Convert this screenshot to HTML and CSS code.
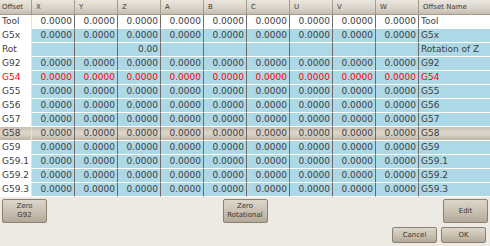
FILE: index.html
```html
<!DOCTYPE html>
<html lang="en">
<head>
  <meta charset="UTF-8">
  <title>Offsets</title>
  <link rel="stylesheet" href="styles.css">
</head>
<body>
  <div class="offset-table">
    <div class="head first">Offset</div>
    <div class="head">X</div>
    <div class="head">Y</div>
    <div class="head">Z</div>
    <div class="head">A</div>
    <div class="head">B</div>
    <div class="head">C</div>
    <div class="head">U</div>
    <div class="head">V</div>
    <div class="head">W</div>
    <div class="head last">Offset Name</div>
  </div>
  <div class="offset-body" id="offsetBody"></div>

  <div class="button-row">
    <button class="btn tall">Zero<br>G92</button>
    <button class="btn tall">Zero<br>Rotational</button>
    <button class="btn tall">Edit</button>
  </div>
  <div class="button-row right">
    <button class="btn small">Cancel</button>
    <button class="btn small">OK</button>
  </div>

  <script src="script.js"></script>
</body>
</html>
```

FILE: script.js
```js
const rows = [
  { name: 'Tool', kind: 'tool' },
  { name: 'G5x' },
  { name: 'Rot', kind: 'rot', label: 'Rotation of Z' },
  { name: 'G92' },
  { name: 'G54', kind: 'active' },
  { name: 'G55' },
  { name: 'G56' },
  { name: 'G57' },
  { name: 'G58', kind: 'selected' },
  { name: 'G59' },
  { name: 'G59.1' },
  { name: 'G59.2' },
  { name: 'G59.3' }
];

const body = document.getElementById('offsetBody');

rows.forEach(function (r) {
  const row = document.createElement('div');
  row.className = 'offset-row' + (r.kind ? ' ' + r.kind : '');

  let html = '<div class="cell name">' + r.name + '</div>';
  for (let i = 0; i < 9; i++) {
    let val = '0.0000';
    if (r.kind === 'rot') val = i === 2 ? '0.00' : '';
    html += '<div class="cell num">' + val + '</div>';
  }
  html += '<div class="cell label">' + (r.label || r.name) + '</div>';
  row.innerHTML = html;
  body.appendChild(row);
});
```

FILE: styles.css
```css
* {
  margin: 0;
  padding: 0;
  box-sizing: border-box;
}

body {
  font-family: "DejaVu Sans", sans-serif;
  background-color: #edeae4;
  width: 490px;
  height: 246px;
  overflow: hidden;
  color: #404040;
}

.offset-table,
.offset-row {
  display: grid;
  grid-template-columns: 32px repeat(9, 43px) 71px;
}

.head {
  height: 15px;
  font-size: 7px;
  line-height: 14px;
  padding-left: 4px;
  color: #3f3a33;
  background: linear-gradient(#ebe6de, #d9d2c7 60%, #c6bdaf);
  border-right: 1px solid #a69c8c;
  border-bottom: 1px solid #a69c8c;
}

.head.first {
  padding-left: 2px;
}

.head.last {
  border-right: none;
}

.offset-body {
  background-color: #ffffff;
}

.offset-row {
  height: 14px;
}

.cell {
  font-size: 9px;
  line-height: 13px;
  height: 14px;
  background-color: #add8e6;
  border-bottom: 1px solid #ffffff;
  white-space: nowrap;
  overflow: hidden;
}

.cell.num {
  text-align: right;
  padding-right: 2px;
  border-right: 1px solid #6a6a6a;
}

.cell.name {
  background-color: #ffffff;
  padding-left: 2px;
  border-right: 1px solid #e2e2e2;
}

.cell.label {
  padding-left: 2px;
}

.tool .cell {
  background-color: #ffffff;
}

.active .cell {
  color: #ff0000;
}

.selected .cell {
  background: linear-gradient(#c9c0b2, #ddd6cc 45%, #d2cabd 70%, #bdb3a4);
}

.button-row {
  display: flex;
  justify-content: space-between;
  padding: 2px 2px 0;
}

.button-row.right {
  justify-content: flex-end;
  gap: 4px;
  padding: 4px 4px 0;
}

.btn {
  font-family: "DejaVu Sans", sans-serif;
  font-size: 7px;
  line-height: 9px;
  color: #3a3630;
  background: linear-gradient(#ddd6cb, #c9bfb0 55%, #b4a998);
  border: 1px solid #8c8070;
  border-radius: 2px;
}

.btn.tall {
  width: 45px;
  height: 24px;
}

.btn.small {
  width: 45px;
  height: 16px;
}
```
